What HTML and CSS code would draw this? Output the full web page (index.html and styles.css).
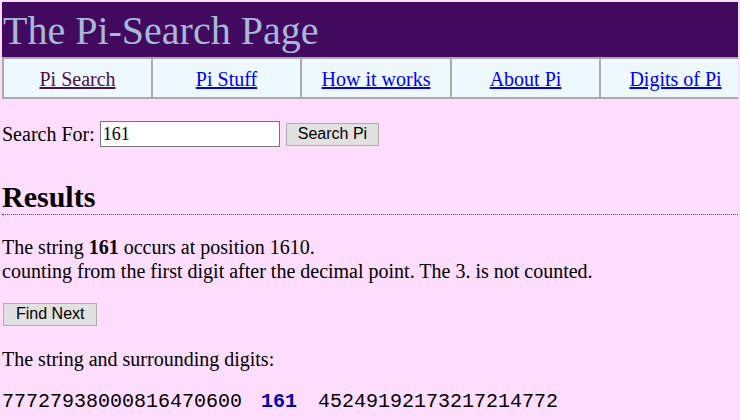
FILE: index.html
```html
<!DOCTYPE html>
<html>
<head>
<meta charset="utf-8">
<title>The Pi-Search Page</title>
<link rel="stylesheet" href="styles.css">
</head>
<body>
<div class="header">The Pi-Search Page</div>
<nav class="nav">
  <a class="nav-item visited" href="#">Pi Search</a>
  <a class="nav-item" href="#">Pi Stuff</a>
  <a class="nav-item" href="#">How it works</a>
  <a class="nav-item" href="#">About Pi</a>
  <a class="nav-item" href="#">Digits of Pi</a>
</nav>
<form class="search">
  <label class="search-label" for="q">Search For:</label>
  <input class="search-input" id="q" type="text" value="161">
  <button class="btn" type="button">Search Pi</button>
</form>
<h2 class="results-title">Results</h2>
<hr class="rule">
<p class="result-text">The string <b>161</b> occurs at position 1610.<br>counting from the first digit after the decimal point. The 3. is not counted.</p>
<div class="next-row"><button class="btn btn-next" type="button">Find Next</button></div>
<p class="surround-label">The string and surrounding digits:</p>
<p class="digits">77727938000816470600 <b class="hit">161</b> 45249192173217214772</p>
</body>
</html>
```
FILE: styles.css
```css
html {
  background: #ffddff;
  overflow: hidden;
}
body {
  margin: 2px;
  background: #ffddff;
  font-family: "Liberation Serif", "Times New Roman", serif;
  font-size: 20px;
  color: #000;
}
.header {
  background: #420a5e;
  color: #a8b8d8;
  font-size: 40px;
  height: 55px;
  line-height: 57px;
  padding-left: 1px;
  white-space: nowrap;
}
.nav {
  display: grid;
  grid-template-columns: 149px 149px 150px 149px 149px;
  width: max-content;
  background: #eef8ff;
  border: 2px solid #aaaaaa;
  border-right: none;
  height: 38px;
}
.nav-item {
  color: #0000ee;
  text-align: center;
  line-height: 40px;
  border-right: 2px solid #aaaaaa;
}
.nav-item:last-child { border-right: none; }
.nav-item.visited { color: #4a1048; }
.search {
  margin: 22px 0 0 0;
  display: flex;
  align-items: center;
  height: 26px;
}
.search-label { margin-right: 5px; }
.search-input {
  box-sizing: border-box;
  width: 180px;
  height: 26px;
  margin: 0 6px 0 0;
  padding: 0 2px;
  border: 1px solid #767676;
  background: #fff;
  font-family: "Liberation Serif", serif;
  font-size: 18px;
}
.btn {
  box-sizing: border-box;
  height: 23px;
  padding: 0 11px;
  background: #e1e1e1;
  border: 1px solid #adadad;
  font-family: "Liberation Sans", Arial, sans-serif;
  font-size: 16px;
  color: #000;
}
.btn-next {
  padding: 0 12px;
  margin-left: 1px;
}
.results-title {
  font-size: 30px;
  margin: 33px 0 0 0;
  line-height: 34px;
}
.rule {
  margin: 0;
  border: none;
  border-top: 1px dotted #ff0000;
  height: 0;
}
.result-text {
  margin: 20px 0 0 0;
  line-height: 24px;
}
.next-row { margin: 18px 0 0 0; }
.surround-label {
  margin: 21px 0 0 0;
  line-height: 24px;
}
.digits {
  margin: 19px 0 0 0;
  font-family: "Liberation Mono", "Courier New", monospace;
  font-size: 20px;
  white-space: pre;
}
.hit {
  color: #0000aa;
  margin: 0 9px 0 7px;
}
```
